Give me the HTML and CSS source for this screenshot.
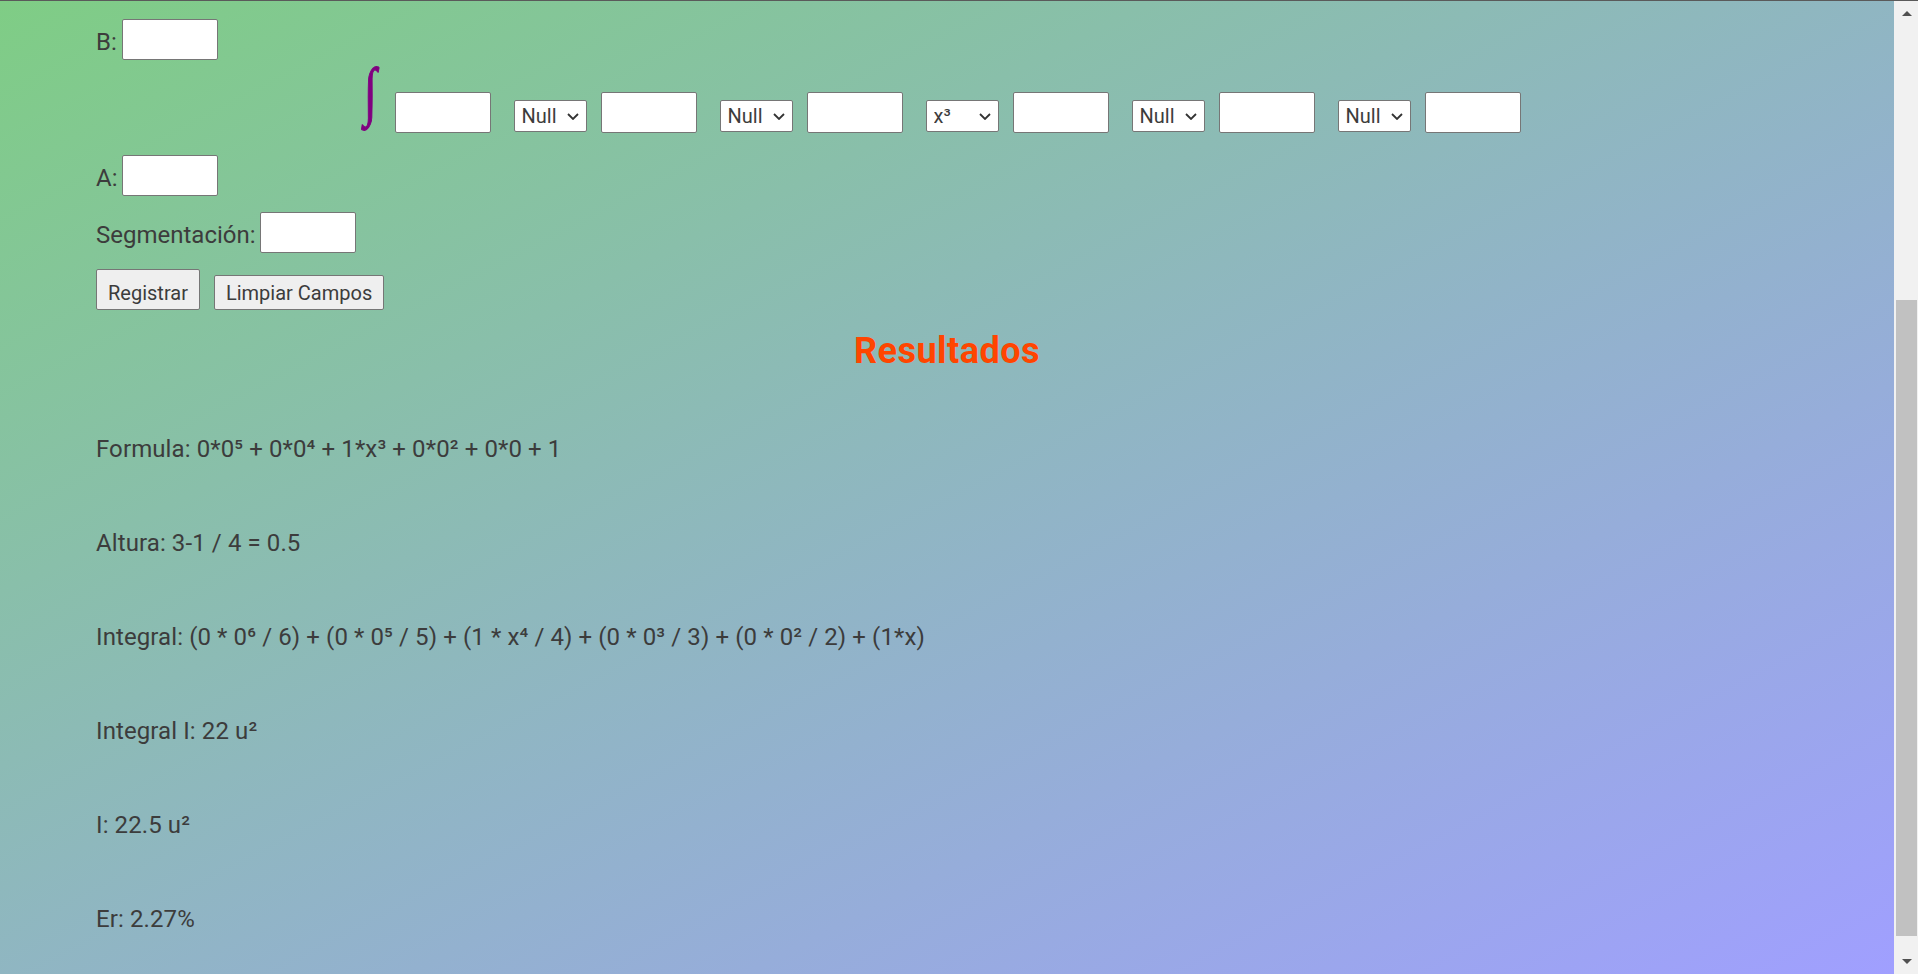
FILE: index.html
```html
<!DOCTYPE html>
<html lang="es">
<head>
<meta charset="utf-8">
<title>Método del trapecio</title>
<link rel="stylesheet" href="styles.css">
</head>
<body>
<div class="page">
  <form class="form">
    <div class="field field-b"><label class="label">B:</label><input type="text" class="box"></div>
    <div class="integral-row">
      <span class="integral">∫</span>
      <input type="text" class="box coef">
      <span class="pick"><select class="pow"><option>Null</option></select><svg class="chev" viewBox="0 0 12 7" width="12" height="7"><path d="M1 1l5 5 5-5" fill="none" stroke="#333" stroke-width="1.8"/></svg></span>
      <input type="text" class="box coef">
      <span class="pick"><select class="pow"><option>Null</option></select><svg class="chev" viewBox="0 0 12 7" width="12" height="7"><path d="M1 1l5 5 5-5" fill="none" stroke="#333" stroke-width="1.8"/></svg></span>
      <input type="text" class="box coef">
      <span class="pick"><select class="pow"><option>x³</option></select><svg class="chev" viewBox="0 0 12 7" width="12" height="7"><path d="M1 1l5 5 5-5" fill="none" stroke="#333" stroke-width="1.8"/></svg></span>
      <input type="text" class="box coef">
      <span class="pick"><select class="pow"><option>Null</option></select><svg class="chev" viewBox="0 0 12 7" width="12" height="7"><path d="M1 1l5 5 5-5" fill="none" stroke="#333" stroke-width="1.8"/></svg></span>
      <input type="text" class="box coef">
      <span class="pick"><select class="pow"><option>Null</option></select><svg class="chev" viewBox="0 0 12 7" width="12" height="7"><path d="M1 1l5 5 5-5" fill="none" stroke="#333" stroke-width="1.8"/></svg></span>
      <input type="text" class="box coef last">
    </div>
    <div class="field field-a"><label class="label">A:</label><input type="text" class="box"></div>
    <div class="field field-seg"><label class="label">Segmentación:</label><input type="text" class="box"></div>
    <div class="actions">
      <button type="button" class="btn btn-primary">Registrar</button>
      <button type="button" class="btn">Limpiar Campos</button>
    </div>
  </form>
  <h2 class="title">Resultados</h2>
  <div class="results">
    <p class="result">Formula: 0*0⁵ + 0*0⁴ + 1*x³ + 0*0² + 0*0 + 1</p>
    <p class="result">Altura: 3-1 / 4 = 0.5</p>
    <p class="result">Integral: (0 * 0⁶ / 6) + (0 * 0⁵ / 5) + (1 * x⁴ / 4) + (0 * 0³ / 3) + (0 * 0² / 2) + (1*x)</p>
    <p class="result">Integral I: 22 u²</p>
    <p class="result">I: 22.5 u²</p>
    <p class="result">Er: 2.27%</p>
  </div>
</div>
<div class="scrollbar">
  <span class="arrow arrow-up"></span>
  <span class="thumb"></span>
  <span class="arrow arrow-down"></span>
</div>
</body>
</html>
```

FILE: styles.css
```css
html, body {
  margin: 0;
  padding: 0;
  height: 100%;
  overflow: hidden;
}

body {
  border-top: 1px solid #5a5a5a;
  box-sizing: border-box;
  font-family: Roboto, "Noto Sans", "Liberation Sans", sans-serif;
  font-size: 24px;
  color: #3c3c3c;
  background: #f1f1f1;
}

.page {
  width: 1894px;
  height: 973px;
  box-sizing: border-box;
  padding: 18px 96px 0;
  background: linear-gradient(to bottom right, #7fcd85, #a09fff);
}

.form {
  display: flex;
  flex-direction: column;
}

.field {
  display: flex;
  align-items: flex-end;
  height: 41px;
}

.label {
  margin: 0 5px 4px 0;
  line-height: normal;
}

.field-seg .label {
  margin-right: 4px;
}

.box {
  width: 96px;
  height: 41px;
  box-sizing: border-box;
  margin: 0;
  padding: 0 4px;
  border: 1px solid #767676;
  border-radius: 2px;
  background: #fff;
  font: 20px Roboto, sans-serif;
}

.integral-row {
  display: flex;
  justify-content: center;
  align-items: flex-end;
  margin-top: 7px;
  height: 66px;
  padding-right: 10px;
}

.integral {
  width: 18px;
  height: 66px;
  margin-right: 13px;
  font-family: "Liberation Serif", "DejaVu Serif", serif;
  font-size: 65px;
  line-height: 48px;
  color: #800080;
  -webkit-text-stroke: 1.2px #800080;
  white-space: nowrap;
  transform: scaleX(0.72);
  transform-origin: left center;
}

.coef {
  margin-right: 23px;
}

.coef.last {
  margin-right: 0;
}

.pick {
  position: relative;
  display: block;
  width: 73px;
  height: 32px;
  margin: 0 14px 1px 0;
}

.pow {
  display: block;
  width: 73px;
  height: 32px;
  box-sizing: border-box;
  margin: 0;
  padding: 0 0 0 7px;
  border: 1px solid #767676;
  border-radius: 2px;
  background-color: #fff;
  color: #3c3c3c;
  font: 20px Roboto, sans-serif;
  appearance: none;
  -webkit-appearance: none;
}

.chev {
  position: absolute;
  right: 8px;
  top: 13px;
  pointer-events: none;
}

.field-a {
  margin-top: 22px;
}

.field-seg {
  margin-top: 16px;
}

.actions {
  display: flex;
  align-items: flex-end;
  gap: 14px;
  margin-top: 16px;
}

.btn {
  height: 35px;
  box-sizing: border-box;
  margin: 0;
  padding: 0 11px;
  border: 1px solid #767676;
  border-radius: 2px;
  background: #efefef;
  color: #3c3c3c;
  font: 20px Roboto, sans-serif;
}

.btn-primary {
  height: 41px;
  padding-top: 6px;
}

.title {
  margin: 20px 0 0;
  text-align: center;
  font-size: 36px;
  font-weight: 700;
  letter-spacing: 0.5px;
  line-height: normal;
  color: #ff4500;
}

.results {
  margin-top: 63px;
}

.result {
  margin: 0 0 66px;
  line-height: 28px;
  letter-spacing: 0.1px;
}

.scrollbar {
  position: fixed;
  top: 1px;
  right: 0;
  width: 24px;
  bottom: 0;
  background: #f1f1f1;
}

.thumb {
  position: absolute;
  left: 2px;
  right: 1px;
  top: 299px;
  height: 636px;
  background: #c1c1c1;
}

.arrow {
  position: absolute;
  left: 8px;
  width: 0;
  height: 0;
  border-left: 5px solid transparent;
  border-right: 5px solid transparent;
}

.arrow-up {
  top: 10px;
  border-bottom: 5px solid #505050;
}

.arrow-down {
  bottom: 10px;
  border-top: 5px solid #505050;
}
```
